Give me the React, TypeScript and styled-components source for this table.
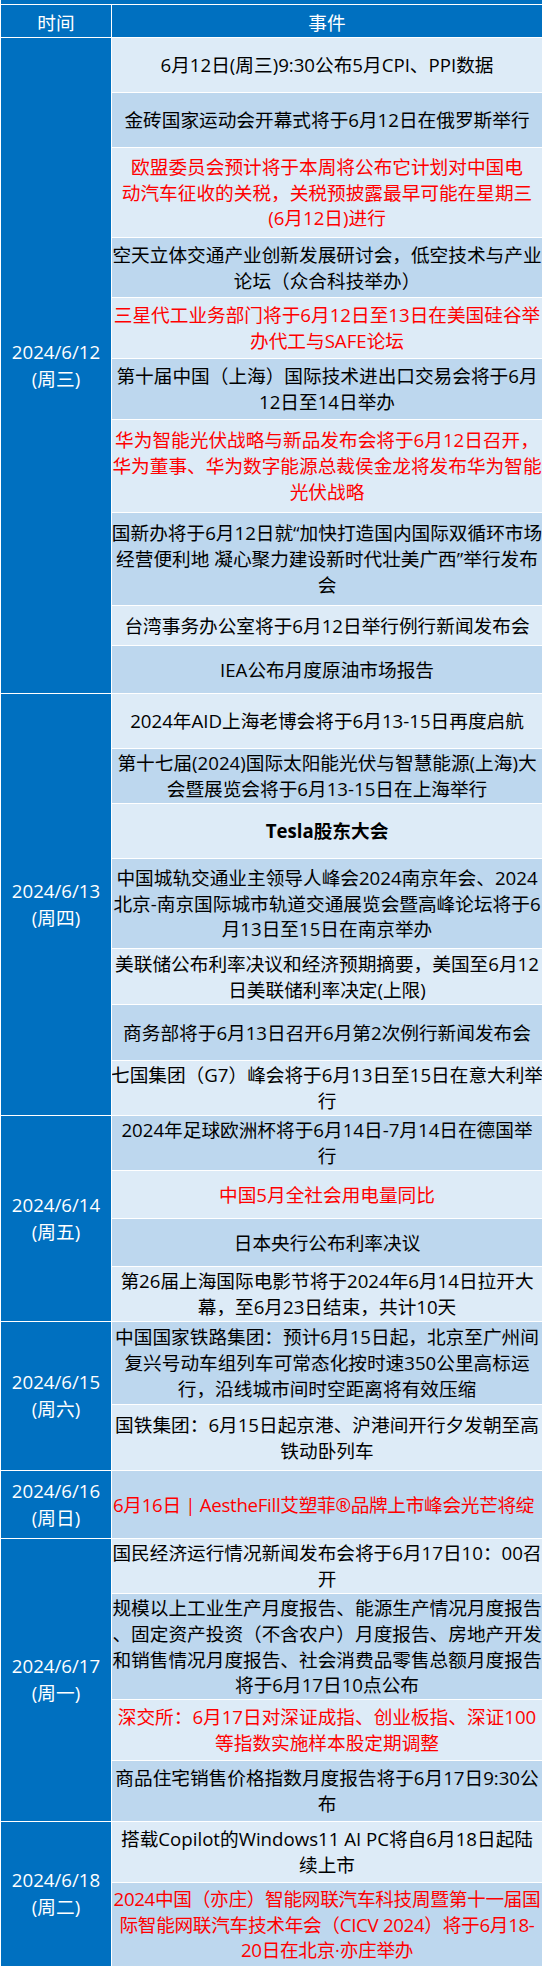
import React from "react";
import styled, { createGlobalStyle } from "styled-components";

const palette = {
  blue: "#0070c0",
  light: "#ddebf7",
  dark: "#bdd7ee",
  red: "#ff0000",
  ink: "#000000",
};

interface EventType {
  lines: string[];
  h: number;
  red?: boolean;
  bold?: boolean;
  left?: boolean;
  tight?: boolean;
}

interface DayType {
  date: string;
  week: string;
  events: EventType[];
}

const days: DayType[] = [
  {
    date: "2024/6/12",
    week: "(周三)",
    events: [
      { h: 54, lines: ["6月12日(周三)9:30公布5月CPI、PPI数据"] },
      { h: 54, lines: ["金砖国家运动会开幕式将于6月12日在俄罗斯举行"] },
      {
        h: 89,
        red: true,
        lines: [
          "欧盟委员会预计将于本周将公布它计划对中国电",
          "动汽车征收的关税，关税预披露最早可能在星期三",
          "(6月12日)进行",
        ],
      },
      { h: 59, lines: ["空天立体交通产业创新发展研讨会，低空技术与产业", "论坛（众合科技举办）"] },
      { h: 60, red: true, lines: ["三星代工业务部门将于6月12日至13日在美国硅谷举", "办代工与SAFE论坛"] },
      { h: 60, lines: ["第十届中国（上海）国际技术进出口交易会将于6月", "12日至14日举办"] },
      {
        h: 92,
        red: true,
        lines: [
          "华为智能光伏战略与新品发布会将于6月12日召开，",
          "华为董事、华为数字能源总裁侯金龙将发布华为智能",
          "光伏战略",
        ],
      },
      {
        h: 92,
        lines: [
          "国新办将于6月12日就“加快打造国内国际双循环市场",
          "经营便利地 凝心聚力建设新时代壮美广西”举行发布",
          "会",
        ],
      },
      { h: 39, lines: ["台湾事务办公室将于6月12日举行例行新闻发布会"] },
      { h: 47, lines: ["IEA公布月度原油市场报告"] },
    ],
  },
  {
    date: "2024/6/13",
    week: "(周四)",
    events: [
      { h: 54, lines: ["2024年AID上海老博会将于6月13-15日再度启航"] },
      { h: 54, lines: ["第十七届(2024)国际太阳能光伏与智慧能源(上海)大", "会暨展览会将于6月13-15日在上海举行"] },
      { h: 54, bold: true, lines: ["Tesla股东大会"] },
      {
        h: 89,
        lines: [
          "中国城轨交通业主领导人峰会2024南京年会、2024",
          "北京-南京国际城市轨道交通展览会暨高峰论坛将于6",
          "月13日至15日在南京举办",
        ],
      },
      { h: 55, lines: ["美联储公布利率决议和经济预期摘要，美国至6月12", "日美联储利率决定(上限)"] },
      { h: 55, lines: ["商务部将于6月13日召开6月第2次例行新闻发布会"] },
      { h: 54, lines: ["七国集团（G7）峰会将于6月13日至15日在意大利举", "行"] },
    ],
  },
  {
    date: "2024/6/14",
    week: "(周五)",
    events: [
      { h: 54, lines: ["2024年足球欧洲杯将于6月14日-7月14日在德国举", "行"] },
      { h: 47, red: true, lines: ["中国5月全社会用电量同比"] },
      { h: 47, lines: ["日本央行公布利率决议"] },
      { h: 54, lines: ["第26届上海国际电影节将于2024年6月14日拉开大", "幕，至6月23日结束，共计10天"] },
    ],
  },
  {
    date: "2024/6/15",
    week: "(周六)",
    events: [
      {
        h: 82,
        lines: [
          "中国国家铁路集团：预计6月15日起，北京至广州间",
          "复兴号动车组列车可常态化按时速350公里高标运",
          "行，沿线城市间时空距离将有效压缩",
        ],
      },
      { h: 65, lines: ["国铁集团：6月15日起京港、沪港间开行夕发朝至高", "铁动卧列车"] },
    ],
  },
  {
    date: "2024/6/16",
    week: "(周日)",
    events: [
      { h: 67, red: true, left: true, tight: true, lines: ["6月16日 | AestheFill艾塑菲®品牌上市峰会光芒将绽"] },
    ],
  },
  {
    date: "2024/6/17",
    week: "(周一)",
    events: [
      { h: 54, lines: ["国民经济运行情况新闻发布会将于6月17日10：00召", "开"] },
      {
        h: 105,
        lines: [
          "规模以上工业生产月度报告、能源生产情况月度报告",
          "、固定资产投资（不含农户）月度报告、房地产开发",
          "和销售情况月度报告、社会消费品零售总额月度报告",
          "将于6月17日10点公布",
        ],
      },
      { h: 60, red: true, lines: ["深交所：6月17日对深证成指、创业板指、深证100", "等指数实施样本股定期调整"] },
      { h: 60, lines: ["商品住宅销售价格指数月度报告将于6月17日9:30公", "布"] },
    ],
  },
  {
    date: "2024/6/18",
    week: "(周二)",
    events: [
      { h: 60, lines: ["搭载Copilot的Windows11 AI PC将自6月18日起陆", "续上市"] },
      {
        h: 83,
        red: true,
        tight: true,
        lines: [
          "2024中国（亦庄）智能网联汽车科技周暨第十一届国",
          "际智能网联汽车技术年会（CICV 2024）将于6月18-",
          "20日在北京·亦庄举办",
        ],
      },
    ],
  },
];

const GlobalStyle = createGlobalStyle`
  html, body {
    margin: 0;
    padding: 0;
    background: #ffffff;
    overflow: hidden;
  }
  body {
    font-family: "Open Sans", "Noto Sans CJK SC", sans-serif;
  }
`;

const Sheet = styled.div`
  width: 542px;
  box-sizing: border-box;
  padding-left: 1px;
  background: #ffffff;
  display: flex;
  flex-direction: column;
  gap: 1px;
  font-size: 18.67px;
`;

// 위쪽에 잘린 행
const TopBand = styled.div`
  height: 4px;
  background: ${palette.blue};
`;

const HeaderRow = styled.div`
  display: flex;
  gap: 1px;
  height: 32px;
`;

const HeadCell = styled.div<{ $w?: number }>`
  ${(p) => (p.$w ? `width: ${p.$w}px; flex: none;` : "flex: 1;")}
  background: ${palette.blue};
  color: #ffffff;
  display: flex;
  align-items: center;
  justify-content: center;
`;

const DayRow = styled.div`
  display: flex;
  gap: 1px;
`;

const DateCell = styled.div`
  width: 110px;
  flex: none;
  background: ${palette.blue};
  color: #ffffff;
  display: flex;
  flex-direction: column;
  align-items: center;
  justify-content: center;
  line-height: 26.7px;
`;

const EventList = styled.div`
  flex: 1;
  min-width: 0;
  display: flex;
  flex-direction: column;
  gap: 1px;
`;

const EventCell = styled.div<{
  $h: number;
  $alt: boolean;
  $red?: boolean;
  $bold?: boolean;
  $left?: boolean;
  $tight?: boolean;
}>`
  height: ${(p) => p.$h}px;
  background: ${(p) => (p.$alt ? palette.dark : palette.light)};
  color: ${(p) => (p.$red ? palette.red : palette.ink)};
  font-weight: ${(p) => (p.$bold ? 700 : 400)};
  letter-spacing: ${(p) => (p.$tight ? "-0.3px" : "0")};
  display: flex;
  flex-direction: column;
  justify-content: center;
  align-items: ${(p) => (p.$left ? "flex-start" : "center")};
  padding-left: ${(p) => (p.$left ? "1px" : "0")};
  line-height: 25.7px;
  white-space: nowrap;
  overflow: hidden;
`;

const App: React.FC = () => {
  let index = 0;

  return (
    <>
      <GlobalStyle />
      <Sheet>
        <TopBand />
        <HeaderRow>
          <HeadCell $w={110}>时间</HeadCell>
          <HeadCell>事件</HeadCell>
        </HeaderRow>

        {days.map((day) => (
          <DayRow key={day.date}>
            <DateCell>
              <span>{day.date}</span>
              <span>{day.week}</span>
            </DateCell>
            <EventList>
              {day.events.map((ev) => {
                const alt = index % 2 === 1;
                index += 1;
                return (
                  <EventCell
                    key={ev.lines[0]}
                    $h={ev.h}
                    $alt={alt}
                    $red={ev.red}
                    $bold={ev.bold}
                    $left={ev.left}
                    $tight={ev.tight}
                  >
                    {ev.lines.map((line) => (
                      <span key={line}>{line}</span>
                    ))}
                  </EventCell>
                );
              })}
            </EventList>
          </DayRow>
        ))}
      </Sheet>
    </>
  );
};

export default App;
